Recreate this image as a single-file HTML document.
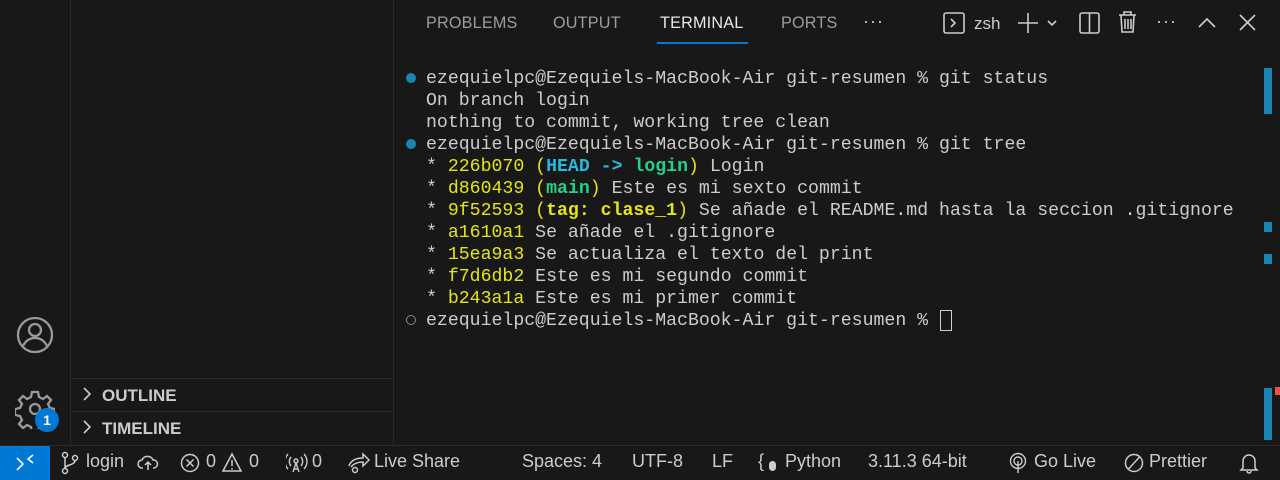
<!DOCTYPE html>
<html><head><meta charset="utf-8"><style>
*{margin:0;padding:0;box-sizing:border-box}
body{width:1280px;height:479px;background:#181818;position:relative;overflow:hidden;font-family:"Liberation Sans",sans-serif;color:#ccc}
.abs{position:absolute}
#act{left:0;top:0;width:71px;height:445px;background:#181818;border-right:1px solid #2b2b2b}
#side{left:72px;top:0;width:322px;height:445px;background:#181818;border-right:1px solid #2b2b2b}
.sec{left:72px;width:321px;height:33px;border-top:1px solid #2b2b2b;font-weight:bold;font-size:17px;color:#ccc;padding-left:30px;line-height:33px}
.tab{top:14px;font-size:16.2px;color:#9d9d9d;letter-spacing:.2px}
.term{left:426px;font-family:"Liberation Mono",monospace;font-size:18.2px;color:#ccc;white-space:pre;line-height:22px}
.y{color:#e5e510}.c{color:#29b8db;font-weight:bold}.g{color:#23d18b;font-weight:bold}.yb{color:#e5e510;font-weight:bold}
#status{left:0;top:445px;width:1280px;height:34px;background:#181818;border-top:1px solid #2b2b2b;font-size:18px;color:#ccc}
#status span{position:absolute;top:5px}
.mk{left:1264px;width:8px;background:#1a85b5}
.dots{font-size:18px;color:#ccc;letter-spacing:1px;top:11px}
</style></head><body>
<div id="act" class="abs">
<svg class="abs" style="left:15px;top:315px" width="40" height="40" viewBox="0 0 40 40" fill="none" stroke="#9a9a9a" stroke-width="2.3"><circle cx="20" cy="20" r="17"/><circle cx="20" cy="15" r="6"/><path d="M8 31c3-6 7-8 12-8s9 2 12 8"/></svg>
<svg class="abs" style="left:15px;top:389px" width="40" height="40" viewBox="0 0 40 40" fill="none" stroke="#9a9a9a" stroke-width="2.3"><path d="M17 3h6l1 5 4 2 4-3 4 4-3 4 2 4 5 1v6l-5 1-2 4 3 4-4 4-4-3-4 2-1 5h-6l-1-5-4-2-4 3-4-4 3-4-2-4-5-1v-6l5-1 2-4-3-4 4-4 4 3 4-2z"/><circle cx="20" cy="20" r="5"/></svg>
<div class="abs" style="left:35px;top:408px;width:24px;height:24px;border-radius:12px;background:#0078d4;color:#fff;font-size:14px;font-weight:bold;text-align:center;line-height:24px">1</div>
</div>
<div id="side" class="abs"></div>
<div class="abs sec" style="top:378px">OUTLINE</div>
<div class="abs sec" style="top:411px">TIMELINE</div>
<svg class="abs" style="left:80px;top:386px" width="14" height="50" fill="none" stroke="#ccc" stroke-width="1.6"><path d="M4 2l6 6-6 6M4 35l6 6-6 6"/></svg>

<div class="abs tab" style="left:426px">PROBLEMS</div>
<div class="abs tab" style="left:553px">OUTPUT</div>
<div class="abs tab" style="left:660px;color:#e7e7e7">TERMINAL</div>
<div class="abs" style="left:657px;top:42px;width:91px;height:2px;background:#0078d4"></div>
<div class="abs tab" style="left:781px">PORTS</div>
<div class="abs dots" style="left:863px">···</div>
<svg class="abs" style="left:943px;top:11px" width="22" height="24" fill="none" stroke="#ccc" stroke-width="1.6"><rect x="1" y="2" width="20" height="20" rx="2"/><path d="M8 8l4 4-4 4"/></svg>
<div class="abs" style="left:974px;top:14px;font-size:17px;color:#ccc">zsh</div>
<svg class="abs" style="left:1016px;top:11px" width="46" height="24" fill="none" stroke="#ccc" stroke-width="1.6"><path d="M12 2v20M2 12h20M32 10l4 4 4-4"/></svg>
<svg class="abs" style="left:1079px;top:11px" width="22" height="24" fill="none" stroke="#ccc" stroke-width="1.6"><rect x="1" y="2" width="19" height="20" rx="2"/><path d="M10.5 2v20"/></svg>
<svg class="abs" style="left:1117px;top:10px" width="22" height="24" fill="none" stroke="#ccc" stroke-width="1.6"><path d="M2 5h17M7 5V2h7v3M4 5l1 17h11l1-17M8 9v10M11 9v10M14 9v10"/></svg>
<div class="abs dots" style="left:1156px">···</div>
<svg class="abs" style="left:1196px;top:12px" width="22" height="22" fill="none" stroke="#ccc" stroke-width="1.6"><path d="M3 15l8-8 8 8"/></svg>
<svg class="abs" style="left:1237px;top:12px" width="22" height="22" fill="none" stroke="#ccc" stroke-width="1.6"><path d="M3 3l15 15M18 3L3 18"/></svg>

<div class="abs" style="left:406px;top:73px;width:10px;height:10px;border-radius:5px;background:#1a85b5"></div>
<div class="abs" style="left:406px;top:139px;width:10px;height:10px;border-radius:5px;background:#1a85b5"></div>
<div class="abs" style="left:406px;top:315px;width:10px;height:10px;border-radius:5px;border:1.5px solid #888"></div>
<div class="abs term" style="top:68px">ezequielpc@Ezequiels-MacBook-Air git-resumen % git status
On branch login
nothing to commit, working tree clean
ezequielpc@Ezequiels-MacBook-Air git-resumen % git tree
* <span class="y">226b070</span> <span class="y">(</span><span class="c">HEAD -&gt; </span><span class="g">login</span><span class="y">)</span> Login
* <span class="y">d860439</span> <span class="y">(</span><span class="g">main</span><span class="y">)</span> Este es mi sexto commit
* <span class="y">9f52593</span> <span class="y">(</span><span class="yb">tag: clase_1</span><span class="y">)</span> Se añade el README.md hasta la seccion .gitignore
* <span class="y">a1610a1</span> Se añade el .gitignore
* <span class="y">15ea9a3</span> Se actualiza el texto del print
* <span class="y">f7d6db2</span> Este es mi segundo commit
* <span class="y">b243a1a</span> Este es mi primer commit
ezequielpc@Ezequiels-MacBook-Air git-resumen % </div>
<div class="abs" style="left:940px;top:310px;width:12px;height:21px;border:1.5px solid #ccc"></div>

<div class="abs mk" style="top:68px;height:46px"></div>
<div class="abs mk" style="top:222px;height:10px"></div>
<div class="abs mk" style="top:254px;height:10px"></div>
<div class="abs mk" style="top:388px;height:52px"></div>
<div class="abs" style="left:1275px;top:387px;width:5px;height:8px;background:#f14c4c"></div>

<div id="status" class="abs">
<div class="abs" style="left:0;top:0;width:50px;height:34px;background:#0078d4"></div>
<svg class="abs" style="left:14px;top:6px" width="22" height="22" fill="none" stroke="#fff" stroke-width="1.6"><path d="M3 18l6-6-6-6M19 3l-5 4 5 4"/></svg>
<svg class="abs" style="left:60px;top:5px" width="20" height="24" fill="none" stroke="#ccc" stroke-width="1.5"><circle cx="5" cy="4" r="2.5"/><circle cx="5" cy="20" r="2.5"/><circle cx="15" cy="7" r="2.5"/><path d="M5 6.5v11M15 9.5c0 5-10 4-10 8"/></svg>
<span style="left:86px">login</span>
<svg class="abs" style="left:137px;top:7px" width="22" height="20" fill="none" stroke="#ccc" stroke-width="1.5"><path d="M6 15H5a4 4 0 010-8 6 6 0 0111 0 4 4 0 011 8h-1M11 17v-7M8 12l3-3 3 3"/></svg>
<svg class="abs" style="left:180px;top:6px" width="22" height="22" fill="none" stroke="#ccc" stroke-width="1.5"><circle cx="10" cy="11" r="8.5"/><path d="M6.5 7.5l7 7M13.5 7.5l-7 7"/></svg>
<span style="left:206px">0</span>
<svg class="abs" style="left:222px;top:6px" width="22" height="22" fill="none" stroke="#ccc" stroke-width="1.5"><path d="M10 2L1 19h18z M10 8v6M10 16v1.5"/></svg>
<span style="left:249px">0</span>
<svg class="abs" style="left:286px;top:6px" width="22" height="22" fill="none" stroke="#ccc" stroke-width="1.4"><circle cx="10" cy="9" r="2"/><path d="M7 20l3-9 3 9M8 17h4M5 5a7 7 0 000 9M15 5a7 7 0 010 9M2 2a11 11 0 000 15M18 2a11 11 0 010 15"/></svg>
<span style="left:312px">0</span>
<svg class="abs" style="left:347px;top:6px" width="24" height="22" fill="none" stroke="#ccc" stroke-width="1.5"><path d="M2 14c2-6 8-8 14-8V2l6 6-6 6v-4c-5 0-9 1-12 5"/><circle cx="8" cy="18" r="2.5"/></svg>
<span style="left:374px">Live Share</span>
<span style="left:522px">Spaces: 4</span>
<span style="left:632px">UTF-8</span>
<span style="left:712px">LF</span>
<span style="left:758px">{</span><div class="abs" style="left:769px;top:15px;width:7px;height:10px;border-radius:4px;background:#ccc"></div>
<span style="left:785px">Python</span>
<span style="left:868px">3.11.3 64-bit</span>
<svg class="abs" style="left:1009px;top:6px" width="20" height="22" fill="none" stroke="#ccc" stroke-width="1.4"><circle cx="9" cy="9" r="7.5"/><circle cx="9" cy="9" r="4"/><path d="M9 9v12"/></svg>
<span style="left:1034px">Go Live</span>
<svg class="abs" style="left:1124px;top:6px" width="22" height="22" fill="none" stroke="#ccc" stroke-width="1.5"><circle cx="10" cy="11" r="8.5"/><path d="M4.5 17l11-12"/></svg>
<span style="left:1149px">Prettier</span>
<svg class="abs" style="left:1239px;top:6px" width="20" height="22" fill="none" stroke="#ccc" stroke-width="1.5"><path d="M4 16V9a6 6 0 0112 0v7l2 2H2zM8 19a2 2 0 004 0"/></svg>
</div>
</body></html>
